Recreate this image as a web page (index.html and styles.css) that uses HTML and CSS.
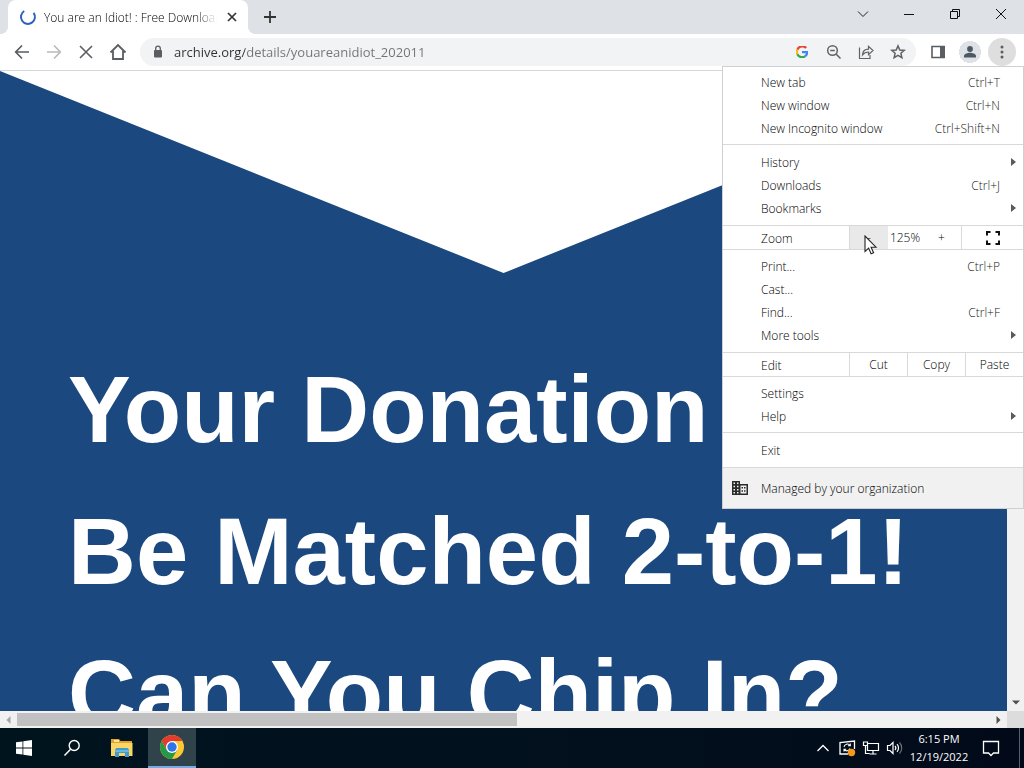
FILE: index.html
```html
<!DOCTYPE html>
<html lang="en">
<head>
<meta charset="utf-8">
<title>You are an Idiot! : Free Download</title>
<link rel="stylesheet" href="styles.css">
</head>
<body>
<div class="tabstrip">
  <div class="tab">
    <svg class="spinner" width="18" height="18" viewBox="0 0 18 18"><path d="M5.2 3A7 7 0 1 0 14.6 4.8" fill="none" stroke="#2d62c0" stroke-width="2"/></svg>
    <span class="tab-title">You are an Idiot! : Free Download</span>
    <button class="tab-close" aria-label="Close tab"><svg width="12" height="12" viewBox="0 0 12 12"><path d="M2 2l8 8M10 2l-8 8" stroke="#333" stroke-width="1.7"/></svg></button>
  </div>
  <button class="tab-new" aria-label="New tab"><svg width="14" height="14" viewBox="0 0 14 14"><path d="M7 1v12M1 7h12" stroke="#333" stroke-width="1.8"/></svg></button>
  <div class="window-controls">
    <button aria-label="Search tabs"><svg width="12" height="12" viewBox="0 0 12 12"><path d="M1 3.500l5 5 5-5" fill="none" stroke="#222"/></svg></button>
    <button aria-label="Minimize"><svg width="12" height="12" viewBox="0 0 12 12"><path d="M1 6.5h10" stroke="#111"/></svg></button>
    <button aria-label="Restore"><svg width="12" height="12" viewBox="0 0 12 12"><path d="M1.5 3.5h7v7h-7zM3.500 3.500v-2h7v7h-2" fill="none" stroke="#111"/></svg></button>
    <button aria-label="Close"><svg width="12" height="12" viewBox="0 0 12 12"><path d="M1 1l10 10M11 1L1 11" stroke="#111"/></svg></button>
  </div>
</div>

<div class="toolbar">
  <button aria-label="Back"><svg width="16" height="16" viewBox="0 0 16 16"><path d="M15 8H2M8 1.500L1.700 8 8 14.500" fill="none" stroke="#5a5d61" stroke-width="1.700"/></svg></button>
  <button aria-label="Forward"><svg width="16" height="16" viewBox="0 0 16 16"><path d="M1 8h13M8 1.500L14.300 8 8 14.500" fill="none" stroke="#b9babc" stroke-width="1.700"/></svg></button>
  <button aria-label="Stop"><svg width="16" height="16" viewBox="0 0 16 16"><path d="M2 2l12 12M14 2L2 14" stroke="#5a5d61" stroke-width="1.600"/></svg></button>
  <button aria-label="Home"><svg width="18" height="18" viewBox="0 0 18 18"><path d="M1.500 9.500L9 2l7.500 7.500M4 8v8h10V8" fill="none" stroke="#5a5d61" stroke-width="1.800"/></svg></button>
  <div class="omnibox">
    <svg class="lock" width="12" height="14" viewBox="0 0 12 14"><rect x="2" y="5" width="8" height="7.500" rx="1" fill="#5a5d61"/><path d="M3.700 6V3.500a2.300 2.300 0 0 1 4.600 0V6" fill="none" stroke="#5a5d61" stroke-width="1.300"/></svg>
    <input class="url" type="text" aria-label="Address and search bar" value="archive.org/details/youareanidiot_202011">
    <button aria-label="Search with Google"><svg width="12" height="12" viewBox="1 1 12 12" fill="none" stroke-width="2.300"><path d="M11.100 3.100A5.200 5.200 0 0 0 2.400 4.700" stroke="#e94235"/><path d="M2.400 4.700a5.200 5.200 0 0 0 0 4.600" stroke="#fabb05"/><path d="M2.400 9.300a5.200 5.200 0 0 0 7.900 1.800" stroke="#34a853"/><path d="M10.300 11.100A5 5 0 0 0 12.200 7.200H7" stroke="#4285f4"/></svg></button>
    <button aria-label="Zoom level"><svg width="16" height="16" viewBox="0 0 16 16"><circle cx="6.500" cy="6.500" r="4.800" fill="none" stroke="#5f6368" stroke-width="1.500"/><path d="M10 10l4.500 4.500M4.200 6.500h4.600" stroke="#5f6368" stroke-width="1.500"/></svg></button>
    <button aria-label="Share"><svg width="18" height="16" viewBox="0 0 18 16"><path d="M2.500 3.500v11H13V11M5.500 11c.3-4 2.500-5.800 6-5.800V2.300L16 6.500l-4.500 4.200V8C8.800 8 7 9 5.500 11z" fill="none" stroke="#5f6368" stroke-width="1.200"/></svg></button>
    <button aria-label="Bookmark this page"><svg width="16" height="16" viewBox="0 0 16 16"><path d="M8 1.900l1.800 4.100 4.400.4-3.300 2.900 1 4.400L8 11.400l-3.900 2.300 1-4.400L1.800 6.400l4.400-.4z" fill="none" stroke="#5f6368" stroke-width="1.500"/></svg></button>
  </div>
  <button aria-label="Side panel"><svg width="14" height="14" viewBox="0 0 14 14"><path d="M1 1.500h12v11H1z" fill="none" stroke="#5a5d61" stroke-width="1.600"/><path d="M9 1h5v12H9z" fill="#5a5d61"/></svg></button>
  <button class="avatar" aria-label="Profile"><svg width="14" height="14" viewBox="0 0 14 14" fill="#4d5865"><circle cx="7" cy="4" r="2.900"/><path d="M1 12.500V11c0-2.300 4-3.200 6-3.200s6 .9 6 3.200v1.500z"/></svg></button>
  <button class="more" aria-label="Chrome menu" aria-expanded="true"><svg width="4" height="14" viewBox="0 0 4 14" fill="#5a5d61"><circle cx="2" cy="2" r="1.500"/><circle cx="2" cy="7" r="1.500"/><circle cx="2" cy="12" r="1.500"/></svg></button>
</div>

<div class="viewport">
  <main class="page">
    <div class="notch"></div>
    <h1>Your Donation<br>Be Matched 2-to-1!<br>Can You Chip In?</h1>
  </main>
  <div class="vscroll"><svg width="8" height="5" viewBox="0 0 8 5"><path d="M0 .5h8L4 4.500z" fill="#505050"/></svg></div>
</div>
<div class="hscroll">
  <div class="hscroll-end"><svg width="5" height="8" viewBox="0 0 5 8"><path d="M4.500 0v8L.5 4z" fill="#a3a3a3"/></svg></div>
  <div class="hscroll-track"><div class="hscroll-thumb"></div></div>
  <div class="hscroll-end"><svg width="5" height="8" viewBox="0 0 5 8"><path d="M.5 0v8L4.500 4z" fill="#505050"/></svg></div>
  <div class="corner"></div>
</div>

<footer class="taskbar">
  <button class="task" aria-label="Start"><svg width="16" height="16" viewBox="0 0 16 16" fill="#fff"><path d="M0 2.300L6.500 1.400v6.100H0zM7.300 1.300L16 0v7.500H7.300zM0 8.400h6.500v6.200L0 13.700zM7.300 8.400H16V16l-8.700-1.300z"/></svg></button>
  <button class="task" aria-label="Search"><svg width="18" height="18" viewBox="0 0 18 18"><circle cx="11.200" cy="6.500" r="5" fill="none" stroke="#fff" stroke-width="1.400"/><path d="M7.600 10.300L1.500 16.500" stroke="#fff" stroke-width="1.500"/></svg></button>
  <div class="pinned">
    <button class="task" aria-label="File Explorer"><svg width="22" height="20" viewBox="0 0 22 20"><path d="M0 1h8l1.500 2H21v4H0z" fill="#e2a32c"/><path d="M0 5h21.500v13H0z" fill="#fbd665"/><path d="M3 2h5v2H3z" fill="#f8e7a4"/><path d="M4 19v-7.500l1.500-1.500h11l1.500 1.500V19h-4v-4H8v4z" fill="#409bd0"/><path d="M4 12h14v2H4z" fill="#67b8df"/></svg></button>
    <button class="task active" aria-label="Google Chrome"><svg width="24" height="24" viewBox="0 0 24 24"><circle cx="12" cy="12" r="12" fill="#fcc934"/><path d="M1.610 6A12 12 0 0 1 22.390 6H12L6.800 15z" fill="#e33b2e"/><path d="M1.610 6A12 12 0 0 0 12 24l5.200-9H6.800z" fill="#279847"/><circle cx="12" cy="12" r="6" fill="#fff"/><circle cx="12" cy="12" r="4.700" fill="#2d75e8"/></svg></button>
  </div>
  <div class="tray">
    <button aria-label="Show hidden icons"><svg width="14" height="14" viewBox="0 0 14 14"><path d="M1.500 10L7 4.500l5.500 5.500" fill="none" stroke="#fff" stroke-width="1.300"/></svg></button>
    <button aria-label="Updates"><svg width="18" height="18" viewBox="0 0 18 18"><path d="M10 15H2V3.500L16.500 2v8" fill="none" stroke="#fff" stroke-width="1.300"/><path d="M6 8a3.300 3.300 0 0 1 6-1.500M12.300 4.500v2.300H10M12 9.500a3.300 3.300 0 0 1-5.800 1M6 12.500v-2.200h2.200" fill="none" stroke="#fff" stroke-width="1.100"/><circle cx="13.500" cy="13.500" r="3.700" fill="#f7981d"/></svg></button>
    <button aria-label="Network"><svg width="18" height="16" viewBox="0 0 18 16"><path d="M5.500 3.500h11v7h-11zM11 10.500v3.500M7.500 14h7M1.500 2h4v3.500h-4zM3.500 5.500v8h4" fill="none" stroke="#fff" stroke-width="1.200"/></svg></button>
    <button aria-label="Volume"><svg width="18" height="16" viewBox="0 0 18 16"><path d="M1.500 5.500H4L7 2.500v11l-3-3H1.500zM9 6a3 3 0 0 1 0 4M11 4.200a5.500 5.500 0 0 1 0 7.600" fill="none" stroke="#fff" stroke-width="1.200"/><path d="M13.500 2.500a8 8 0 0 1 0 11" fill="none" stroke="#68717b" stroke-width="1.200"/></svg></button>
    <div class="clock"><span>6:15 PM</span><span>12/19/2022</span></div>
    <button class="notify" aria-label="Notifications"><svg width="18" height="18" viewBox="0 0 18 18"><path d="M1.500 2.500h15v11.500h-5L9 16.500 6.500 14h-5z" fill="none" stroke="#fff" stroke-width="1.300"/></svg></button>
    <div class="show-desktop"></div>
  </div>
</footer>

<div class="menu">
  <div class="group first">
    <button class="item">New tab<kbd>Ctrl+T</kbd></button>
    <button class="item">New window<kbd>Ctrl+N</kbd></button>
    <button class="item">New Incognito window<kbd>Ctrl+Shift+N</kbd></button>
  </div>
  <div class="group spaced">
    <button class="item submenu">History</button>
    <button class="item">Downloads<kbd>Ctrl+J</kbd></button>
    <button class="item submenu">Bookmarks</button>
  </div>
  <div class="strip zoom">
    <span class="strip-label">Zoom</span>
    <button class="minus" aria-label="Zoom out">-</button>
    <span class="percent">125%</span>
    <button class="plus" aria-label="Zoom in">+</button>
    <button class="full" aria-label="Full screen"><svg width="14" height="14" viewBox="0 0 14 14"><path d="M1 4.500V1h3.500M9.500 1H13v3.500M13 9.500V13H9.500M4.500 13H1V9.500" fill="none" stroke="#111" stroke-width="2"/></svg></button>
  </div>
  <div class="group">
    <button class="item">Print...<kbd>Ctrl+P</kbd></button>
    <button class="item">Cast...</button>
    <button class="item">Find...<kbd>Ctrl+F</kbd></button>
    <button class="item submenu">More tools</button>
  </div>
  <div class="strip">
    <span class="strip-label">Edit</span>
    <button>Cut</button>
    <button>Copy</button>
    <button>Paste</button>
  </div>
  <div class="group tight">
    <button class="item">Settings</button>
    <button class="item submenu">Help</button>
  </div>
  <div class="group spaced">
    <button class="item">Exit</button>
  </div>
  <button class="managed"><svg width="16" height="14" viewBox="0 0 16 14"><path d="M0 0h8v3h8v11H0z" fill="#2b2b2b"/><path d="M8.500 4.500H14.500v8H8.500z" fill="#f1f1f1"/><path d="M1.500 1.500H3V3H1.500zM5 1.500h1.500V3H5zM1.500 4.700H3v1.500H1.500zM5 4.700h1.500v1.500H5zM1.500 7.900H3v1.500H1.500zM5 7.900h1.500v1.500H5zM1.500 11H3v1.500H1.500zM5 11h1.500v1.500H5z" fill="#f1f1f1"/><path d="M9.500 6H11v1.500H9.500zM12 6h1.500v1.500H12zM9.500 9.200H11v1.500H9.500zM12 9.200h1.500v1.500H12z" fill="#2b2b2b"/></svg>Managed by your organization</button>
</div>
<svg class="cursor" width="14" height="20" viewBox="0 0 14 20"><path d="M1 1v15.500l3.600-3.400 2.500 5.700 2.500-1.100-2.500-5.500H12z" fill="#fff" stroke="#222" stroke-width="1.100"/></svg>
</body>
</html>
```
FILE: styles.css
```css
* { box-sizing: border-box; }

body {
  margin: 0;
  height: 100vh;
  display: flex;
  flex-direction: column;
  overflow: hidden;
  position: relative;
  font-family: "Open Sans", "Noto Sans", sans-serif;
  font-size: 12px;
  font-weight: 300;
  color: #000;
}

button {
  border: 0;
  padding: 0;
  background: none;
  font: inherit;
  color: inherit;
  display: flex;
  align-items: center;
  justify-content: center;
}

.tabstrip {
  flex: none;
  height: 34px;
  display: flex;
  background: #dee1e6;
  padding-left: 8px;
}
.tab {
  width: 240px;
  display: flex;
  align-items: center;
  gap: 7px;
  padding: 0 8px 0 11px;
  background: #fff;
  border-radius: 8px 8px 0 0;
  position: relative;
}
.tab::before,
.tab::after {
  content: "";
  position: absolute;
  bottom: 0;
  width: 8px;
  height: 8px;
}
.tab::before {
  right: 100%;
  background: radial-gradient(circle at 0 0, #dee1e6 8px, #fff 8px);
}
.tab::after {
  left: 100%;
  background: radial-gradient(circle at 100% 0, #dee1e6 8px, #fff 8px);
}
.spinner { flex: none; }
.tab-title {
  flex: 1;
  min-width: 0;
  overflow: hidden;
  white-space: nowrap;
  color: #000;
  -webkit-mask-image: linear-gradient(90deg, #000 88%, transparent);
  mask-image: linear-gradient(90deg, #000 88%, transparent);
}
.tab-close { width: 16px; }
.tab-new { width: 28px; margin-left: 8px; }
.window-controls { margin-left: auto; display: flex; }
.window-controls button { width: 46px; height: 28px; }

.toolbar {
  flex: none;
  height: 37px;
  display: flex;
  align-items: center;
  gap: 4px;
  padding: 0 8px;
  background: #fff;
  border-bottom: 1px solid #d5d6d8;
}
.toolbar button {
  flex: none;
  width: 28px;
  height: 28px;
  border-radius: 50%;
}
.omnibox {
  flex: 1;
  height: 28px;
  margin: 0 4px;
  padding: 0 4px 0 12px;
  display: flex;
  align-items: center;
  gap: 4px;
  border-radius: 14px;
  background: #f1f3f4;
}
.lock { flex: none; margin-right: 6px; }
.url {
  flex: 1;
  min-width: 0;
  border: 0;
  padding: 0;
  outline: 0;
  font: inherit;
  font-size: 13px;
  font-weight: 400;
  line-height: 20px;
  color: transparent;
  background: linear-gradient(90deg, #303134 71px, #707478 71px);
  -webkit-background-clip: text;
  background-clip: text;
}
.toolbar .avatar { background: radial-gradient(circle, #dee1e6 11px, transparent 11px); }
.toolbar .more { background: #dedede; }

.viewport { flex: 1; min-height: 0; display: flex; }
.page { flex: 1; min-width: 0; overflow: hidden; background: #1a487f; }
.notch {
  height: 202px;
  background: #fff;
  clip-path: polygon(0 0, 100% 0, 50% 100%);
}
h1 {
  margin: 0;
  padding: 66px 0 0 68px;
  font-family: "Liberation Sans", Arial, sans-serif;
  font-size: 94px;
  line-height: 142px;
  font-weight: 700;
  white-space: nowrap;
  color: #fff;
}
.vscroll {
  width: 17px;
  background: #f1f1f1;
  display: flex;
  align-items: flex-end;
  justify-content: center;
  padding-bottom: 6px;
}

.hscroll { flex: none; height: 17px; display: flex; background: #f1f1f1; }
.hscroll-end {
  width: 17px;
  display: flex;
  align-items: center;
  justify-content: center;
}
.hscroll-track { flex: 1; padding: 2px 0; }
.hscroll-thumb { width: 51.4%; height: 13px; background: #c1c1c1; }
.corner { width: 17px; background: #dcdcdc; }

.taskbar {
  flex: none;
  height: 40px;
  display: flex;
  color: #fff;
  background: linear-gradient(90deg, #00141e, #02101d 60%, #020a1a);
}
.task { width: 48px; height: 40px; }
.pinned { display: flex; gap: 2px; margin-left: 2px; }
.task.active { background: #30434a; border-bottom: 2px solid #76aae4; }
.tray { margin-left: auto; display: flex; }
.tray button { width: 24px; }
.clock {
  width: 64px;
  display: flex;
  flex-direction: column;
  align-items: center;
  justify-content: center;
  line-height: 18px;
  font-size: 11px;
  font-weight: 400;
}
.tray .notify { width: 40px; }
.show-desktop { width: 5px; margin-left: 8px; border-left: 1px solid #596069; }

.menu {
  position: absolute;
  top: 66px;
  right: 0;
  width: 302px;
  background: #fff;
  border: 1px solid #cfcfcf;
}
.group { padding: 5px 0; border-bottom: 1px solid #d9d9d9; }
.group.first { padding: 4px 0; }
.group.spaced { padding-top: 6px; }
.group.tight { padding-bottom: 4px; }
.item {
  width: 100%;
  height: 23px;
  padding: 0 23px 0 38px;
  justify-content: flex-start;
  position: relative;
}
kbd { margin-left: auto; font: inherit; color: #222; }
.submenu::after {
  content: "";
  position: absolute;
  right: 7px;
  top: 7px;
  border: 4px solid transparent;
  border-left: 5px solid #5a5a5a;
  border-right: 0;
}
.strip { height: 24px; display: flex; border-bottom: 1px solid #d9d9d9; }
.strip-label { flex: 1; padding-left: 38px; line-height: 25px; }
.strip button { width: 58px; border-left: 1px solid #d9d9d9; }
.strip .minus { width: 39px; background: #e9e9e9; }
.percent { width: 34px; line-height: 23px; text-align: center; }
.strip .plus { width: 39px; border-left: 0; }
.strip .full { width: 62px; }
.managed {
  width: 100%;
  height: 40px;
  padding-left: 9px;
  gap: 13px;
  justify-content: flex-start;
  background: #f1f1f1;
}
.cursor { position: absolute; left: 864px; top: 235px; }
```
